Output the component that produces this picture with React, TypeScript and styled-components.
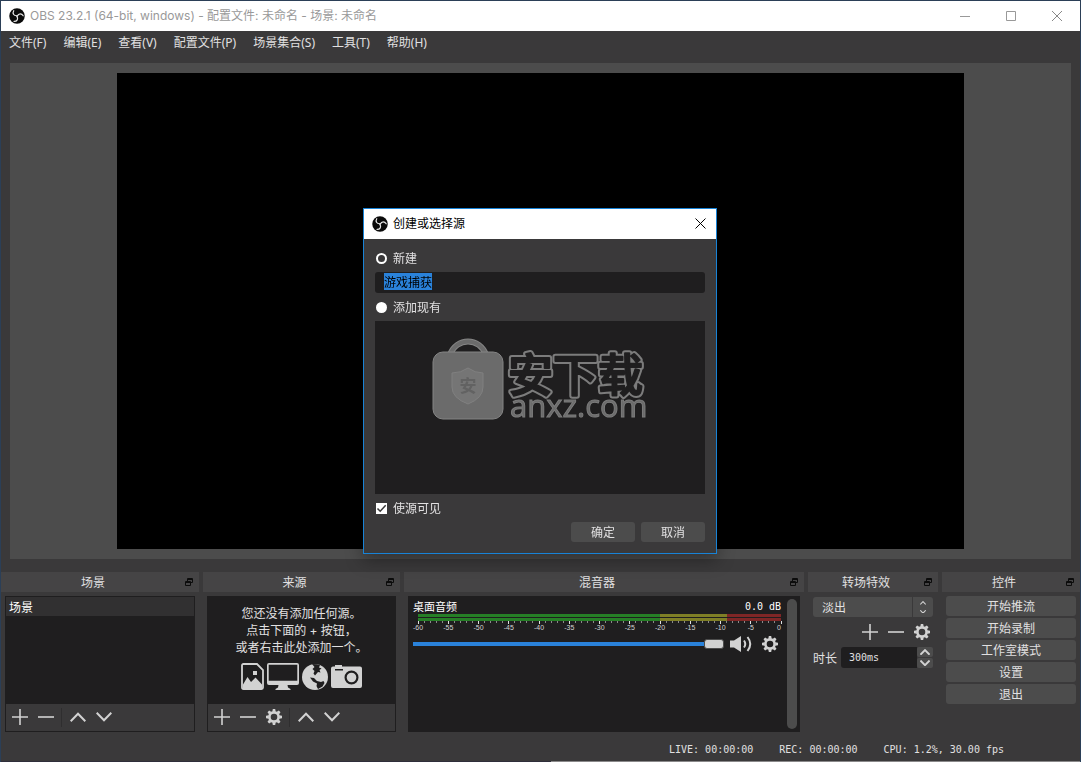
import React, { useEffect, useRef } from "react";
import styled, { createGlobalStyle, css } from "styled-components";

const colors = {
  window: "#3a393a",
  sunken: "#1f1e1f",
  raised: "#4c4c4c",
  header: "#454445",
  text: "#e1e0e1",
  icon: "#d2d2d2",
  accent: "#2a82da",
};

const uiFont = `Inter, "Noto Sans CJK SC", sans-serif`;
const menuFont = `"Noto Sans", "Noto Sans CJK SC", sans-serif`;
const cjkFont = `"Noto Sans CJK SC", sans-serif`;
const monoFont = `"DejaVu Sans Mono", "Noto Sans CJK SC", monospace`;

const GlobalStyle = createGlobalStyle`
  * { box-sizing: border-box; }
  body { margin: 0; background: ${colors.window}; }
  button, input, select { font: inherit; color: inherit; }
`;

const Window = styled.div`
  min-height: 100vh;
  display: flex;
  flex-direction: column;
  border: 1px solid #2b3f57;
  border-bottom: 0;
  background: ${colors.window};
  color: ${colors.text};
  font: 12px/16px ${cjkFont};
`;

/* ---------- title bars ---------- */

const TitleBar = styled.header<{ $active?: boolean }>`
  display: flex;
  align-items: center;
  height: 30px;
  padding-left: 8px;
  background: #fff;
  color: ${(p) => (p.$active ? "#000" : "#999")};
  font-family: ${uiFont};
`;

const TitleText = styled.h1`
  flex: 1;
  margin: 0 0 0 5px;
  font-size: 12px;
  font-weight: 400;
  white-space: nowrap;
`;

const CaptionButton = styled.button<{ $narrow?: boolean }>`
  display: flex;
  align-items: center;
  justify-content: center;
  width: ${(p) => (p.$narrow ? 31 : 46)}px;
  height: 30px;
  padding: 0;
  border: 0;
  background: none;
`;

/* ---------- menu ---------- */

const MenuBar = styled.nav`
  display: flex;
  flex-wrap: wrap;
  gap: 17px;
  min-height: 24px;
  padding: 0 8px;
`;

const MenuItem = styled.button`
  height: 24px;
  padding: 0;
  border: 0;
  background: none;
  font-family: ${menuFont};
`;

/* ---------- preview ---------- */

const Preview = styled.main`
  flex: 1;
  display: flex;
  justify-content: center;
  min-height: 200px;
  margin: 8px 9px 13px;
  padding: 10px;
  background: ${colors.raised};
`;

/* 286px is the height of everything above and below the canvas. */
const Canvas = styled.div`
  width: calc((100vh - 286px) * 16 / 9);
  max-width: 100%;
  background: #000;
`;

/* ---------- docks ---------- */

const Docks = styled.div`
  display: grid;
  grid-template-columns: 198fr 197fr 400fr 130fr 138fr;
  gap: 4px;
`;

const DockBox = styled.section`
  display: flex;
  flex-direction: column;
  gap: 4px;
  min-width: 0;
`;

const DockHeader = styled.div`
  display: flex;
  align-items: center;
  height: 20px;
  padding-right: 6px;
  background: ${colors.header};
`;

const DockTitle = styled.h2`
  flex: 1;
  margin: 0;
  font-size: 12px;
  font-weight: 400;
  text-align: center;
`;

const FloatButton = styled.button`
  display: flex;
  padding: 0;
  border: 0;
  background: none;
`;

const ListPanel = styled.div`
  display: flex;
  flex-direction: column;
  height: 136px;
  margin: 0 4px;
  border: 1px solid ${colors.sunken};
  background: ${colors.sunken};
`;

const SceneList = styled.ul`
  flex: 1;
  margin: 0;
  padding: 0;
  list-style: none;
`;

const SceneRow = styled.li`
  height: 19px;
  padding-left: 3px;
  background: #313031;
  color: #fff;
  line-height: 19px;
`;

const Toolbar = styled.div`
  display: flex;
  align-items: flex-start;
  height: 27px;
  padding-left: 1px;
  background: ${colors.window};
`;

const ToolButton = styled.button`
  display: flex;
  flex: none;
  align-items: center;
  justify-content: center;
  width: 26px;
  height: 26px;
  padding: 0;
  border: 0;
  background: none;
  color: ${colors.icon};
`;

const Separator = styled.span`
  width: 1px;
  height: 19px;
  margin: 4px 3px 0 2px;
  background: #2f2e2f;
`;

const EmptyHint = styled.div`
  flex: 1;
  padding-top: 8px;
  text-align: center;
  font-family: ${uiFont};
  line-height: 17px;
`;

const HintLine = styled.p`
  margin: 0;
`;

const HintIcons = styled.div`
  display: flex;
  align-items: center;
  justify-content: center;
  gap: 3px;
  margin-top: 7px;
  color: ${colors.icon};
`;

/* ---------- mixer ---------- */

const MixerPanel = styled.div`
  display: flex;
  gap: 6px;
  height: 136px;
  margin: 0 4px;
  padding: 3px 3px 3px 5px;
  background: ${colors.sunken};
`;

const Channel = styled.div`
  flex: 1;
  min-width: 0;
`;

const ChannelHead = styled.div`
  display: flex;
  justify-content: space-between;
  height: 15px;
  color: #fff;
  font: 11px/15px ${cjkFont};
`;

const Level = styled.output`
  font: 10px/15px ${monoFont};
`;

const Meter = styled.svg`
  display: block;
  width: 100%;
  height: 20px;
  padding-left: 5px;
  overflow: visible;
  font: 7px "Liberation Sans", sans-serif;
  fill: #d2d2d2;
`;

const ChannelControls = styled.div`
  display: flex;
  align-items: center;
  height: 20px;
  margin-right: -2px;
`;

const VolumeSlider = styled.input`
  flex: 1;
  min-width: 0;
  height: 10px;
  margin: 0 4px 0 0;
  appearance: none;
  background: linear-gradient(${colors.accent}, ${colors.accent}) center / 100% 4px no-repeat;
  border-radius: 2px;

  &::-webkit-slider-thumb {
    appearance: none;
    width: 20px;
    height: 10px;
    border: 1px solid #4c4c4c;
    border-radius: 3px;
    background: ${colors.icon};
  }
`;

const AudioSettings = styled(ToolButton)`
  margin-left: 3px;
`;

const ScrollThumb = styled.div`
  width: 10px;
  border-radius: 5px;
  background: ${colors.raised};
`;

/* ---------- transitions ---------- */

const TransitionPanel = styled.div`
  display: flex;
  flex-direction: column;
  padding: 1px 5px 0;
`;

const SelectBox = styled.div`
  display: grid;
  grid-template-columns: 1fr 21px;
  height: 20px;
`;

const TransitionSelect = styled.select`
  grid-area: 1 / 1 / 2 / 3;
  width: 100%;
  padding: 0 9px;
  border: 0;
  border-radius: 3px;
  appearance: none;
  background: ${colors.raised};
`;

const SelectArrows = styled.span`
  grid-area: 1 / 2;
  display: flex;
  flex-direction: column;
  align-items: center;
  justify-content: center;
  gap: 5px;
  border-left: 1px solid ${colors.window};
  color: ${colors.icon};
  pointer-events: none;
`;

const TransitionTools = styled.div`
  display: flex;
  justify-content: flex-end;
  margin: 2px -2px 2px 0;
`;

const DurationRow = styled.div`
  display: flex;
  align-items: center;
  height: 21px;
`;

const DurationLabel = styled.label`
  width: 28px;
  white-space: nowrap;
`;

const DurationInput = styled.input`
  flex: 1;
  min-width: 0;
  height: 21px;
  padding: 0 8px;
  border: 0;
  border-radius: 3px 0 0 3px;
  background: ${colors.sunken};
  font: 10px/21px ${monoFont};
`;

const Stepper = styled.div`
  display: flex;
  flex-direction: column;
  gap: 1px;
`;

const StepButton = styled.button`
  display: flex;
  align-items: center;
  justify-content: center;
  width: 16px;
  height: 10px;
  padding: 0;
  border: 0;
  border-radius: 2px;
  background: ${colors.raised};
  color: ${colors.icon};
`;

/* ---------- buttons ---------- */

const ControlsPanel = styled.div`
  display: flex;
  flex-direction: column;
  gap: 2px;
  padding: 0 4px;
`;

const PushButton = styled.button<{ $dialog?: boolean }>`
  height: 20px;
  padding: 0;
  border: 0;
  border-radius: 3px;
  background: ${colors.raised};
  line-height: 20px;
  ${(p) =>
    p.$dialog &&
    css`
      width: 64px;
    `}
`;

/* ---------- status ---------- */

const StatusBar = styled.footer`
  display: flex;
  justify-content: flex-end;
  gap: 26px;
  height: 30px;
  padding: 6px 76px 0 0;
  border-bottom: 1px solid #6e6d6e;
  border-image: linear-gradient(90deg, #2f2e3a 51%, #8a898a 51%) 1;
  font: 10px/23px ${monoFont};
  white-space: pre;
`;

/* ---------- dialog ---------- */

const Overlay = styled.div`
  position: fixed;
  inset: 0;
  display: flex;
  align-items: center;
  justify-content: center;
  padding-right: 1px;
`;

const Dialog = styled.section`
  width: 354px;
  border: 1px solid #1883d7;
  background: ${colors.window};
  color: ${colors.text};
  font: 12px/16px ${cjkFont};
  box-shadow: 0 6px 16px rgba(0, 0, 0, 0.35);
`;

const DialogBody = styled.form`
  display: flex;
  flex-direction: column;
  padding: 11px;
`;

const Option = styled.label`
  display: flex;
  align-items: center;
  gap: 6px;
  height: 16px;
`;

const Radio = styled.input`
  width: 11px;
  height: 11px;
  margin: 0 0 0 1px;
  appearance: none;
  outline: 0;
  border-radius: 50%;
  background: #fff;

  &:checked {
    border: 2px solid #fff;
    background: ${colors.window};
  }
`;

const CheckBox = styled.input`
  width: 11px;
  height: 11px;
  margin: 0;
  appearance: none;
  background: #fff;
`;

const CheckFrame = styled.span`
  display: grid;
  margin-left: 1px;

  > * {
    grid-area: 1 / 1;
  }

  > svg {
    pointer-events: none;
  }
`;

const NameInput = styled.input`
  height: 21px;
  margin: 6px 0;
  padding: 0 9px 2px;
  border: 0;
  border-radius: 3px;
  outline: 0;
  background: ${colors.sunken};

  &::selection {
    background: ${colors.accent};
    color: #000;
  }
`;

const SourceList = styled.div`
  height: 173px;
  margin: 6px 0;
  padding: 16px 0 0 57px;
  background: ${colors.sunken};
`;

const DialogButtons = styled.div`
  display: flex;
  justify-content: flex-end;
  gap: 6px;
  margin-top: 6px;
`;

/* ---------- drawings ---------- */

const ObsLogo = () => (
  <svg width="16" height="16" viewBox="0 0 32 32" aria-hidden="true">
    <circle cx="16" cy="16" r="15.5" fill="#0a0a0a" />
    <g fill="none" stroke="#e8e8e8" strokeWidth="2.4" strokeLinecap="round">
      {[0, 120, 240].map((a) => (
        <path key={a} transform={`rotate(${a} 16 16)`} d="M16 15.500C9 16 6.500 10.500 9.500 5.500" />
      ))}
    </g>
  </svg>
);

const PlusIcon = () => (
  <svg width="16" height="16" viewBox="0 0 16 16" fill="currentColor" aria-hidden="true">
    <path d="M7.200 0h1.600v7.200H16v1.600H8.800V16H7.200V8.800H0V7.200h7.200z" />
  </svg>
);

const MinusIcon = () => (
  <svg width="16" height="16" viewBox="0 0 16 16" fill="currentColor" aria-hidden="true">
    <path d="M0 7.200h16v1.600H0z" />
  </svg>
);

const Chevron = ({ down, width = 16, weight = 2 }: { down?: boolean; width?: number; weight?: number }) => (
  <svg width={width} height={(width * 10) / 16} viewBox="0 0 16 10" fill="none" stroke="currentColor" strokeWidth={weight} aria-hidden="true">
    <path d={down ? "M.7.8 8 8.300 15.300.8" : "M.7 9.200 8 1.700 15.300 9.200"} />
  </svg>
);

const GearIcon = () => (
  <svg width="16" height="16" viewBox="0 0 16 16" aria-hidden="true">
    <circle cx="8" cy="8" r="4.600" fill="none" stroke="currentColor" strokeWidth="2.600" />
    {[0, 45, 90, 135, 180, 225, 270, 315].map((a) => (
      <path key={a} transform={`rotate(${a} 8 8)`} d="M6.300 2.800 6.800 0H9.200L9.700 2.800z" fill="currentColor" />
    ))}
  </svg>
);

const FloatIcon = () => (
  <svg width="8" height="8" viewBox="0 0 8 8" fill="none" stroke="#0c0c0c" aria-hidden="true">
    <path d="M2.500 3V.5h5v4H6M2 1.500h6" />
    <path d="M.5 3.500h5v4h-5zM0 4.500h6" />
  </svg>
);

const ImageFileIcon = () => (
  <svg width="23" height="27" viewBox="0 0 23 27" aria-hidden="true">
    <path d="M1 2.500Q1 1 2.500 1H16l6 6v17.500q0 1.500-1.500 1.500h-18Q1 26 1 24.500z" fill="none" stroke="currentColor" strokeWidth="1.800" />
    <path d="M2 21.500 6.500 14l3.500 5 4.500-4.500 6.500 7V26H2z" fill="currentColor" />
    <path d="M12 8h4v4h-4z" fill="currentColor" />
  </svg>
);

const MonitorIcon = () => (
  <svg width="32" height="27" viewBox="0 0 32 27" fill="currentColor" aria-hidden="true">
    <path fillRule="evenodd" d="M2 0h28q2 0 2 2v18q0 2-2 2H20.500l.5 2.500 2.500 1.500V27h-15v-1l2.500-1.500.5-2.500H2q-2 0-2-2V2Q0 0 2 0zM1.700 1.700v16h28.600v-16z" />
  </svg>
);

const GlobeIcon = () => (
  <svg width="26" height="26" viewBox="0 0 26 26" aria-hidden="true">
    <circle cx="13" cy="13" r="13" fill="currentColor" />
    <path
      d="M10 0 15 .2 18 1 17 3.500 19.500 4.500 17.500 6 18.500 8.500 16 8 13 11.500 11.500 9.500 12.500 7 10.500 5 12.500 3z
         M8 13.500 12 14 15 17 19 18 21.500 17 22.500 19 20.500 22.500 16 25 14.500 22 15 19.500 11 17.500z"
      fill="#1f1e1f"
    />
  </svg>
);

const CameraIcon = () => (
  <svg width="31" height="24" viewBox="0 0 31 24" fill="currentColor" aria-hidden="true">
    <path fillRule="evenodd" d="M4 1.500V0h7v1.500h18q2 0 2 2V21q0 2-2 2H2q-2 0-2-2V3.500q0-2 2-2zM4 4v1.500h8V4zM20.500 5.500a7 7 0 1 0 0 14 7 7 0 0 0 0-14z" />
    <circle cx="20.500" cy="12.500" r="4.800" />
  </svg>
);

const SpeakerIcon = () => (
  <svg width="22" height="16" viewBox="0 0 22 16" aria-hidden="true">
    <path d="M0 4.500h4L11 0v16l-7-4.500H0z" fill="currentColor" />
    <path d="M14 4.500q2.500 3.500 0 7M17.500 1q5.500 7 0 14" fill="none" stroke="currentColor" strokeWidth="2" />
  </svg>
);

/* Watermark: padlock-shaped bag beside the outlined site name. */
const Watermark = () => (
  <svg width="220" height="88" viewBox="0 0 220 88" role="img" aria-label="安下载 anxz.com">
    <defs>
      <text id="site-name" x="76" y="55" fontFamily="Noto Sans CJK SC" fontWeight="500" fontSize="45" strokeLinejoin="round">
        安下载
      </text>
    </defs>
    <path d="M18 18C24 0 48 0 54 18" fill="none" stroke="#858585" strokeWidth="6" />
    <path d="M18 18C24 0 48 0 54 18" fill="none" stroke="#6b6b6b" strokeWidth="4" />
    <rect x="1" y="15" width="70" height="67" rx="10" fill="#6b6b6b" stroke="#858585" />
    <path d="M36 31Q43 36 51 36V50Q51 61 36 67 20 61 20 50V36Q29 36 36 31z" fill="#757575" stroke="#808080" />
    <text x="36" y="55" textAnchor="middle" fontFamily="Noto Sans CJK SC" fontWeight="700" fontSize="17" fill="#626262">
      安
    </text>
    <use href="#site-name" fill="#7c7c7c" stroke="#7c7c7c" strokeWidth="6" />
    <use href="#site-name" fill="#1f1e1f" stroke="#1f1e1f" strokeWidth="2" />
    <text x="78" y="80" fontFamily="Open Sans" fontWeight="400" fontSize="31" fill="#6b6b6b" stroke="#7c7c7c" strokeWidth="1">
      anxz.com
    </text>
  </svg>
);

const MeterScale = () => {
  const pct = (db: number) => `${((db + 60) / 60) * 100}%`;
  const zones = [
    { from: -60, to: -20, fill: "#267f26" },
    { from: -20, to: -9, fill: "#7f7f26" },
    { from: -9, to: 0, fill: "#7f2626" },
  ];
  const ticks = Array.from({ length: 61 }, (_, i) => i - 60);
  return (
    <Meter aria-label="音量">
      {[0, 4].map((y) =>
        zones.map((z) => (
          <rect key={`${y}${z.from}`} x={pct(z.from)} y={y} width={`${((z.to - z.from) / 60) * 100}%`} height="3" fill={z.fill} shapeRendering="crispEdges" />
        ))
      )}
      {ticks.map((t) => (
        <line key={t} x1={pct(t)} x2={pct(t)} y1="7" y2={t % 5 ? 9 : 10} stroke={t % 5 ? "#8a8a8a" : "#e1e0e1"} shapeRendering="crispEdges" />
      ))}
      {ticks
        .filter((t) => t % 5 === 0)
        .map((t) => (
          <text key={t} x={pct(t)} y="16" textAnchor={t === 0 ? "end" : "middle"}>
            {t}
          </text>
        ))}
    </Meter>
  );
};

const Dock = ({ title, children }: { title: string; children: React.ReactNode }) => (
  <DockBox>
    <DockHeader>
      <DockTitle>{title}</DockTitle>
      <FloatButton aria-label="浮动">
        <FloatIcon />
      </FloatButton>
    </DockHeader>
    {children}
  </DockBox>
);

const menus = ["文件(F)", "编辑(E)", "查看(V)", "配置文件(P)", "场景集合(S)", "工具(T)", "帮助(H)"];
const controls = ["开始推流", "开始录制", "工作室模式", "设置", "退出"];

const SourceDialog = () => {
  const nameRef = useRef<HTMLInputElement>(null);
  useEffect(() => {
    nameRef.current?.focus();
    nameRef.current?.select();
  }, []);

  return (
    <Overlay>
      <Dialog role="dialog" aria-label="创建或选择源">
        <TitleBar $active>
          <ObsLogo />
          <TitleText as="h2">创建或选择源</TitleText>
          <CaptionButton $narrow aria-label="关闭">
            <svg width="11" height="12" viewBox="0 0 11 12" stroke="#000" aria-hidden="true">
              <path d="M.5.5l10 10M10.500.5l-10 10" />
            </svg>
          </CaptionButton>
        </TitleBar>
        <DialogBody onSubmit={(e) => e.preventDefault()}>
          <Option>
            <Radio type="radio" name="mode" defaultChecked />
            新建
          </Option>
          <NameInput ref={nameRef} aria-label="名称" defaultValue="游戏捕获" />
          <Option>
            <Radio type="radio" name="mode" />
            添加现有
          </Option>
          <SourceList>
            <Watermark />
          </SourceList>
          <Option>
            <CheckFrame>
              <CheckBox type="checkbox" defaultChecked />
              <svg width="11" height="11" viewBox="0 0 11 11" fill="none" stroke="#3a393a" strokeWidth="1.500" aria-hidden="true">
                <path d="M1.500 5.500 4.200 8.200 9.700 2.200" />
              </svg>
            </CheckFrame>
            使源可见
          </Option>
          <DialogButtons>
            <PushButton $dialog type="submit">确定</PushButton>
            <PushButton $dialog type="button">取消</PushButton>
          </DialogButtons>
        </DialogBody>
      </Dialog>
    </Overlay>
  );
};

export default function App() {
  return (
    <>
      <GlobalStyle />
      <Window>
        <TitleBar>
          <ObsLogo />
          <TitleText>OBS 23.2.1 (64-bit, windows) - 配置文件: 未命名 - 场景: 未命名</TitleText>
          <CaptionButton aria-label="最小化">
            <svg width="10" height="10" viewBox="0 0 10 10" stroke="#999" aria-hidden="true">
              <path d="M0 5.500h10" />
            </svg>
          </CaptionButton>
          <CaptionButton aria-label="最大化">
            <svg width="10" height="10" viewBox="0 0 10 10" fill="none" stroke="#999" aria-hidden="true">
              <path d="M.5.5h9v9h-9z" />
            </svg>
          </CaptionButton>
          <CaptionButton aria-label="关闭">
            <svg width="10" height="10" viewBox="0 0 10 10" stroke="#888" aria-hidden="true">
              <path d="M0 0l10 10M10 0L0 10" />
            </svg>
          </CaptionButton>
        </TitleBar>

        <MenuBar>
          {menus.map((m) => (
            <MenuItem key={m}>{m}</MenuItem>
          ))}
        </MenuBar>

        <Preview>
          <Canvas />
        </Preview>

        <Docks>
          <Dock title="场景">
            <ListPanel>
              <SceneList>
                <SceneRow>场景</SceneRow>
              </SceneList>
              <Toolbar>
                <ToolButton aria-label="添加"><PlusIcon /></ToolButton>
                <ToolButton aria-label="移除"><MinusIcon /></ToolButton>
                <Separator />
                <ToolButton aria-label="上移"><Chevron /></ToolButton>
                <ToolButton aria-label="下移"><Chevron down /></ToolButton>
              </Toolbar>
            </ListPanel>
          </Dock>

          <Dock title="来源">
            <ListPanel>
              <EmptyHint>
                <HintLine>您还没有添加任何源。</HintLine>
                <HintLine>点击下面的 + 按钮，</HintLine>
                <HintLine>或者右击此处添加一个。</HintLine>
                <HintIcons>
                  <ImageFileIcon />
                  <MonitorIcon />
                  <GlobeIcon />
                  <CameraIcon />
                </HintIcons>
              </EmptyHint>
              <Toolbar>
                <ToolButton aria-label="添加"><PlusIcon /></ToolButton>
                <ToolButton aria-label="移除"><MinusIcon /></ToolButton>
                <ToolButton aria-label="属性"><GearIcon /></ToolButton>
                <Separator />
                <ToolButton aria-label="上移"><Chevron /></ToolButton>
                <ToolButton aria-label="下移"><Chevron down /></ToolButton>
              </Toolbar>
            </ListPanel>
          </Dock>

          <Dock title="混音器">
            <MixerPanel>
              <Channel>
                <ChannelHead>
                  <label htmlFor="volume">桌面音频</label>
                  <Level>0.0 dB</Level>
                </ChannelHead>
                <MeterScale />
                <ChannelControls>
                  <VolumeSlider id="volume" type="range" min="0" max="100" defaultValue="100" />
                  <ToolButton aria-label="静音"><SpeakerIcon /></ToolButton>
                  <AudioSettings aria-label="音频设置"><GearIcon /></AudioSettings>
                </ChannelControls>
              </Channel>
              <ScrollThumb />
            </MixerPanel>
          </Dock>

          <Dock title="转场特效">
            <TransitionPanel>
              <SelectBox>
                <TransitionSelect aria-label="转场特效" defaultValue="fade">
                  <option value="fade">淡出</option>
                </TransitionSelect>
                <SelectArrows>
                  <Chevron width={6} weight={3} />
                  <Chevron width={6} weight={3} down />
                </SelectArrows>
              </SelectBox>
              <TransitionTools>
                <ToolButton aria-label="添加"><PlusIcon /></ToolButton>
                <ToolButton aria-label="移除"><MinusIcon /></ToolButton>
                <ToolButton aria-label="属性"><GearIcon /></ToolButton>
              </TransitionTools>
              <DurationRow>
                <DurationLabel htmlFor="duration">时长</DurationLabel>
                <DurationInput id="duration" defaultValue="300ms" />
                <Stepper>
                  <StepButton aria-label="增加"><Chevron width={10} weight={3} /></StepButton>
                  <StepButton aria-label="减少"><Chevron width={10} weight={3} down /></StepButton>
                </Stepper>
              </DurationRow>
            </TransitionPanel>
          </Dock>

          <Dock title="控件">
            <ControlsPanel>
              {controls.map((c) => (
                <PushButton key={c}>{c}</PushButton>
              ))}
            </ControlsPanel>
          </Dock>
        </Docks>

        <StatusBar>
          <span>LIVE: 00:00:00</span>
          <span>REC: 00:00:00</span>
          <span>CPU: 1.2%, 30.00 fps</span>
        </StatusBar>
      </Window>
      <SourceDialog />
    </>
  );
}
